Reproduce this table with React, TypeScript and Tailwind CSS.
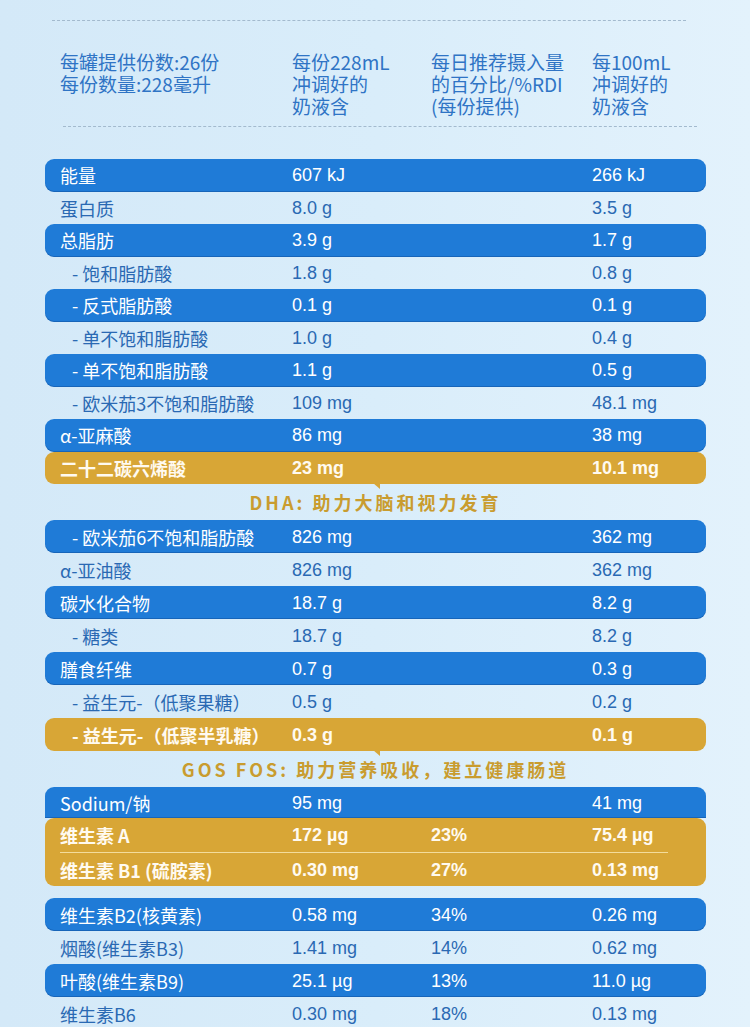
type Tone = "blue" | "plain" | "gold";

interface Row {
  label: string;
  serving: string;
  rdi?: string;
  per100: string;
  tone: Tone;
  indent?: boolean;
}

const cjk = "font-['Noto_Sans_CJK_SC','Noto_Sans',sans-serif]";
const num = "font-['Liberation_Sans',Arial,sans-serif]";

const fats: Row[] = [
  { label: "能量", serving: "607 kJ", per100: "266 kJ", tone: "blue" },
  { label: "蛋白质", serving: "8.0 g", per100: "3.5 g", tone: "plain" },
  { label: "总脂肪", serving: "3.9 g", per100: "1.7 g", tone: "blue" },
  { label: "- 饱和脂肪酸", serving: "1.8 g", per100: "0.8 g", tone: "plain", indent: true },
  { label: "- 反式脂肪酸", serving: "0.1 g", per100: "0.1 g", tone: "blue", indent: true },
  { label: "- 单不饱和脂肪酸", serving: "1.0 g", per100: "0.4 g", tone: "plain", indent: true },
  { label: "- 单不饱和脂肪酸", serving: "1.1 g", per100: "0.5 g", tone: "blue", indent: true },
  { label: "- 欧米茄3不饱和脂肪酸", serving: "109 mg", per100: "48.1 mg", tone: "plain", indent: true },
  { label: "α-亚麻酸", serving: "86 mg", per100: "38 mg", tone: "blue" },
  { label: "二十二碳六烯酸", serving: "23 mg", per100: "10.1 mg", tone: "gold" },
];

const carbs: Row[] = [
  { label: "- 欧米茄6不饱和脂肪酸", serving: "826 mg", per100: "362 mg", tone: "blue", indent: true },
  { label: "α-亚油酸", serving: "826 mg", per100: "362 mg", tone: "plain" },
  { label: "碳水化合物", serving: "18.7 g", per100: "8.2 g", tone: "blue" },
  { label: "- 糖类", serving: "18.7 g", per100: "8.2 g", tone: "plain", indent: true },
  { label: "膳食纤维", serving: "0.7 g", per100: "0.3 g", tone: "blue" },
  { label: "- 益生元-（低聚果糖）", serving: "0.5 g", per100: "0.2 g", tone: "plain", indent: true },
  { label: "- 益生元-（低聚半乳糖）", serving: "0.3 g", per100: "0.1 g", tone: "gold", indent: true },
];

const vitaminsGold: Row[] = [
  { label: "维生素 A", serving: "172 µg", rdi: "23%", per100: "75.4 µg", tone: "gold" },
  { label: "维生素 B1 (硫胺素)", serving: "0.30 mg", rdi: "27%", per100: "0.13 mg", tone: "gold" },
];

const vitamins: Row[] = [
  { label: "维生素B2(核黄素)", serving: "0.58 mg", rdi: "34%", per100: "0.26 mg", tone: "blue" },
  { label: "烟酸(维生素B3)", serving: "1.41 mg", rdi: "14%", per100: "0.62 mg", tone: "plain" },
  { label: "叶酸(维生素B9)", serving: "25.1 µg", rdi: "13%", per100: "11.0 µg", tone: "blue" },
  { label: "维生素B6", serving: "0.30 mg", rdi: "18%", per100: "0.13 mg", tone: "plain" },
];

const toneBox: Record<Tone, string> = {
  blue: "bg-[#1f7bd7] text-white rounded-[9px] shadow-[inset_0_-1px_0_rgba(10,60,130,0.35)]",
  plain: "text-[#2a69b3]",
  gold: "bg-[#d8a636] text-[#fffaf0] rounded-[9px] font-bold",
};

function RowCells({ row }: { row: Row }) {
  return (
    <div className="grid h-full grid-cols-[232px_139px_161px_1fr] items-center pl-[15px]">
      <span className={`${cjk} text-[18px] leading-none ${row.indent ? "pl-[12px]" : ""}`}>
        {row.label}
      </span>
      <span className={`${num} text-[18px] leading-none`}>{row.serving}</span>
      <span className={`${num} text-[18px] leading-none`}>{row.rdi ?? ""}</span>
      <span className={`${num} text-[18px] leading-none`}>{row.per100}</span>
    </div>
  );
}

function TableRow({ row, height }: { row: Row; height: string }) {
  return (
    <div className={`relative ${height} ${toneBox[row.tone]}`}>
      <RowCells row={row} />
      {row.tone === "gold" && (
        <span className="absolute bottom-[-5px] left-[328px] h-0 w-0 border-l-[7px] border-t-[6px] border-l-transparent border-t-[#d8a636]" />
      )}
    </div>
  );
}

function Caption({ children }: { children: React.ReactNode }) {
  return (
    <div className="flex h-[36px] items-center justify-center">
      <span className={`${cjk} text-[18px] font-bold tracking-[3px] text-[#c99c2f]`}>{children}</span>
    </div>
  );
}

export default function App() {
  return (
    <div className="h-[1027px] w-[750px] overflow-hidden bg-gradient-to-r from-[#d4e9f8] via-[#d9edfa] to-[#e3f2fc]">
      <div className="pt-[20px]">
        <div className="ml-[52px] w-[634px] border-t border-dashed border-[#a3bace]" />
        <div
          className={`${cjk} mt-[30px] grid grid-cols-[232px_139px_161px_1fr] pl-[60px] text-[19px] leading-[22px] text-[#2f74c5]`}
        >
          <div>
            每罐提供份数:26份
            <br />
            每份数量:228毫升
          </div>
          <div>
            每份228mL
            <br />
            冲调好的
            <br />
            奶液含
          </div>
          <div>
            每日推荐摄入量
            <br />
            的百分比/%RDI
            <br />
            (每份提供)
          </div>
          <div>
            每100mL
            <br />
            冲调好的
            <br />
            奶液含
          </div>
        </div>
        <div className="ml-[63px] mt-[9px] w-[634px] border-t border-dashed border-[#a3bace]" />
      </div>

      <div className="mx-[45px] mt-[32px] w-[661px]">
        {fats.map((r, i) => (
          <TableRow key={i} row={r} height="h-[32.5px]" />
        ))}
        <Caption>DHA: 助力大脑和视力发育</Caption>

        {carbs.map((r, i) => (
          <TableRow key={i} row={r} height="h-[33px]" />
        ))}
        <Caption>GOS FOS: 助力营养吸收，建立健康肠道</Caption>

        <div className={`h-[31px] ${toneBox.blue} rounded-b-none`}>
          <RowCells row={{ label: "Sodium/钠", serving: "95 mg", per100: "41 mg", tone: "blue" }} />
        </div>
        <div className="relative h-[68px] rounded-[9px] bg-[#d8a636] font-bold text-[#fffaf0]">
          <div className="h-[34px]">
            <RowCells row={vitaminsGold[0]} />
          </div>
          <div className="ml-[15px] w-[608px] border-t border-[#f3dc9c]" />
          <div className="h-[33px]">
            <RowCells row={vitaminsGold[1]} />
          </div>
        </div>

        <div className="mt-[12px]">
          {vitamins.map((r, i) => (
            <TableRow key={i} row={r} height="h-[33px]" />
          ))}
        </div>
      </div>
    </div>
  );
}
